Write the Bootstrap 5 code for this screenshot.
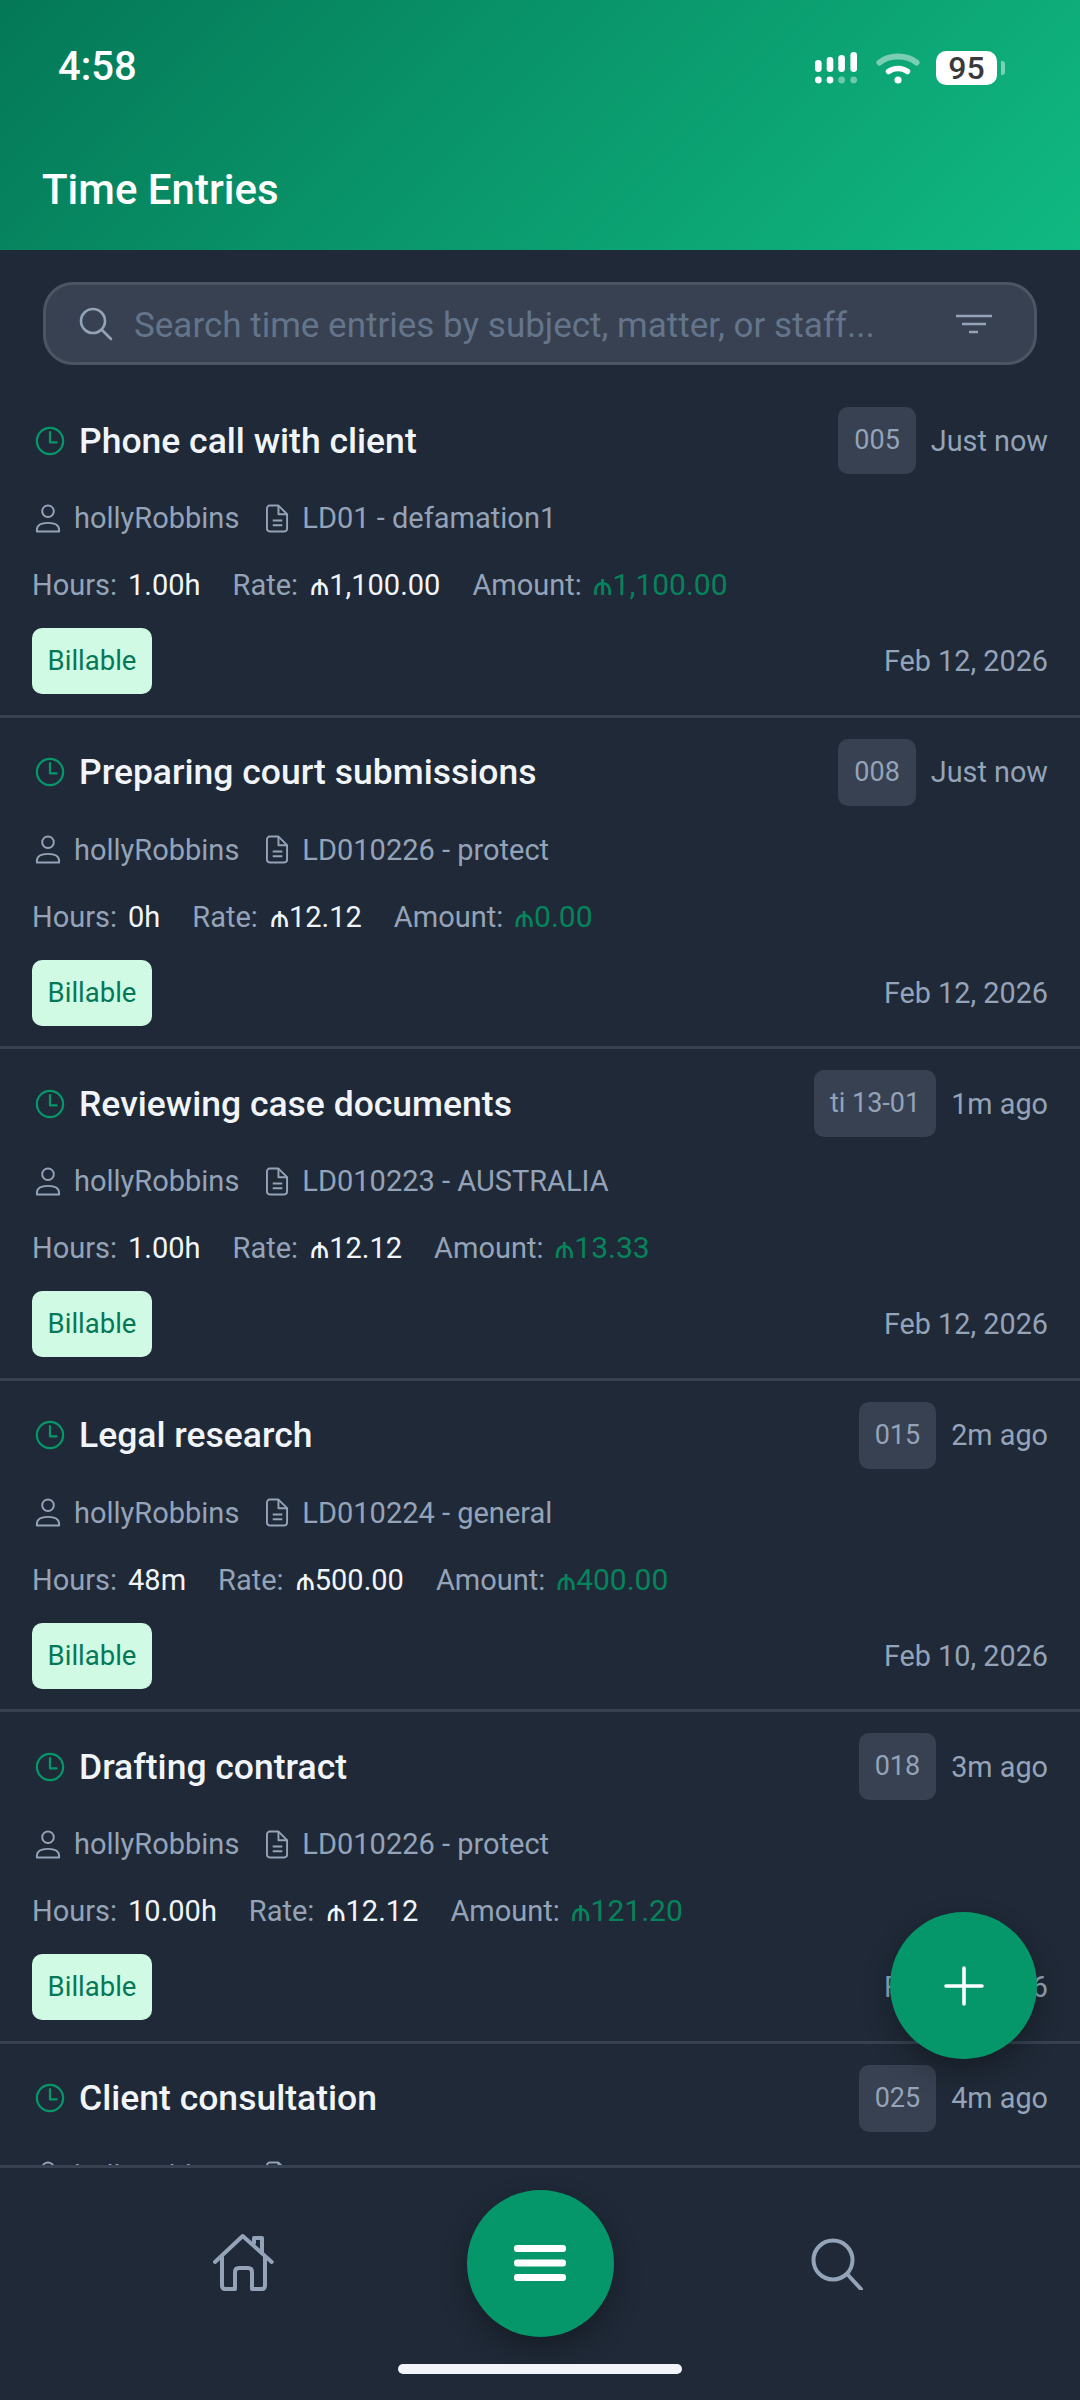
<!DOCTYPE html>
<html lang="en">
<head>
  <meta charset="UTF-8" />
  <meta name="viewport" content="width=device-width, initial-scale=1.0"/>
  <title>Time Entries</title>
  <link href="https://cdn.jsdelivr.net/npm/bootstrap@5.3.0/dist/css/bootstrap.min.css" rel="stylesheet" />
  <style>
    body {
      font-family: Roboto, "DejaVu Sans", sans-serif;
      background: #1f2937;
      margin: 0;
    }
    .app-screen {
      width: 1080px;
      height: 2400px;
      background: #1f2937;
      overflow: hidden;
    }
    .top-header {
      height: 250px;
      background: linear-gradient(135deg, #047857 0%, #10b981 100%);
      color: #fff;
    }
    .status-row {
      height: 167px;
      padding: 48px 75px 0 58px;
    }
    .clock-text { font-size: 40px; font-weight: 500; line-height: 38px; }
    .status-icons { margin-top: 3px; }
    .sig-ico { margin-right: 19px; }
    .wifi-ico { margin-right: 16px; }
    .batt-pill {
      width: 61px;
      height: 34px;
      background: #fff;
      border-radius: 10px;
      color: #3a3a3c;
      font-size: 32px;
      font-weight: 500;
      line-height: 34px;
      text-align: center;
    }
    .batt-cap { width: 4px; height: 14px; background: rgba(255,255,255,.45); border-radius: 0 3px 3px 0; margin-left: 4px; }
    .screen-title { font-size: 42px; font-weight: 500; line-height: 46px; padding-left: 42px; margin: 0; }

    .search-wrap { padding: 32px 43px 21px; }
    .search-box {
      height: 83px;
      background: #374151;
      border: 3px solid #4b5563;
      border-radius: 30px;
      padding: 0 42px 0 32px;
    }
    .search-box input {
      background: transparent;
      border: 0;
      box-shadow: none;
      color: #f1f5f9;
      font-size: 35px;
      padding: 6px 0 0 20px;
    }
    .search-box input::placeholder { color: #64748b; opacity: 1; }
    .search-box input:focus { background: transparent; box-shadow: none; color: #f1f5f9; }

    .entry-list { overflow: hidden; min-height: 0; }
    .entry-row {
      height: 331.5px;
      padding: 21px 32px 0 32px;
      border-bottom: 3px solid #374151;
    }
    .clock-ico { margin-left: 3px; }
    .entry-title { font-size: 35.5px; font-weight: 500; color: #f1f5f9; line-height: 40px; margin: 0 0 0 14px; }
    .entry-code {
      height: 67px;
      padding: 0 16px;
      background: #374151;
      border-radius: 10px;
      color: #94a3b8;
      font-size: 27px;
      line-height: 67px;
      margin-right: 15px;
    }
    .muted-text { color: #94a3b8; font-size: 29px; line-height: 36px; }
    .side-text { color: #94a3b8; font-size: 28.8px; line-height: 36px; }
    .entry-meta { margin-top: 26px; }
    .user-ico { margin: 0 13px 0 3px; }
    .file-ico { margin: 0 13px 0 27px; }
    .entry-stats { margin-top: 31px; column-gap: 32px; }
    .stat-val { color: #f1f5f9; margin-left: 11px; }
    .rate-val { color: #f1f5f9; margin-left: 12px; }
    .stat-amt { color: #05845c; margin-left: 11px; font-size: 30px; }
    .entry-foot { margin-top: 25px; }
    .bill-tag {
      height: 66px;
      width: 120px;
      background: #d1fae5;
      color: #047857;
      border-radius: 10px;
      font-size: 27.5px;
      font-weight: 450;
      line-height: 66px;
      text-align: center;
    }

    .bottom-bar {
      height: 235px;
      border-top: 3px solid #374151;
      background: #1f2937;
    }
    .nav-cell { width: 297px; height: 190px; }
    .green-fab {
      width: 147px;
      height: 147px;
      background: #059669;
      border-radius: 50%;
      border: 0;
      box-shadow: 0 12px 28px rgba(0,0,0,.28);
    }
    .add-fab { right: 43px; top: 1912px; }
    .home-bar {
      left: 398px;
      top: 2364px;
      width: 284px;
      height: 10px;
      background: #f1f5f9;
      border-radius: 5px;
    }
  </style>
</head>
<body>
  <div class="app-screen position-relative d-flex flex-column">

    <div class="top-header flex-shrink-0">
      <div class="status-row d-flex justify-content-between align-items-start">
        <span class="clock-text">4:58</span>
        <div class="status-icons d-flex align-items-center">
          <!-- signal -->
          <svg width="42" height="33" viewBox="0 0 42 33" fill="#fff" class="sig-ico">
            <rect x="0" y="8" width="6.6" height="12" rx="3.3"/>
            <rect x="11.7" y="5" width="6.6" height="15" rx="3.3"/>
            <rect x="23.3" y="3" width="6.6" height="17" rx="3.3"/>
            <rect x="35.4" y="0" width="6.6" height="20" rx="3.3"/>
            <circle cx="3.3" cy="28" r="3.4"/>
            <circle cx="15" cy="28" r="3.4"/>
            <circle cx="26.6" cy="28" r="3.4" opacity=".4"/>
            <circle cx="38.7" cy="28" r="3.4" opacity=".4"/>
          </svg>
          <!-- wifi -->
          <svg width="44" height="33" viewBox="0 0 44 33" fill="none" stroke="#fff" stroke-linecap="round" class="wifi-ico">
            <path d="M3.5 10.5C13 2.5 31 2.5 40.5 10.5" stroke-width="6" opacity=".45"/>
            <path d="M12.5 19.5C18 15.5 26 15.5 31.5 19.5" stroke-width="5.5"/>
            <circle cx="22" cy="28" r="3.6" fill="#fff" stroke="none"/>
          </svg>
          <div class="batt-pill">95</div>
          <div class="batt-cap"></div>
        </div>
      </div>
      <h1 class="screen-title">Time Entries</h1>
    </div>

    <div class="search-wrap flex-shrink-0">
      <div class="search-box d-flex align-items-center">
        <svg width="36" height="36" viewBox="0 0 36 36" fill="none" stroke="#94a3b8" stroke-width="2.6" stroke-linecap="round" class="flex-shrink-0">
          <circle cx="15" cy="15" r="12"/>
          <path d="M24 24l9 9"/>
        </svg>
        <input type="text" class="form-control" placeholder="Search time entries by subject, matter, or staff..." />
        <svg width="36" height="20" viewBox="0 0 36 20" fill="none" stroke="#94a3b8" stroke-width="2.6" class="flex-shrink-0">
          <path d="M0 2h36M6 10h24M13 18h9"/>
        </svg>
      </div>
    </div>

    <div class="entry-list flex-grow-1" id="entryList"></div>

    <div class="bottom-bar flex-shrink-0 d-flex justify-content-center">
      <div class="nav-cell d-flex align-items-center justify-content-center">
        <svg width="62" height="62" viewBox="22 32 62 62" fill="none" stroke="#94a3b8" stroke-width="4" stroke-linecap="round" stroke-linejoin="round">
          <path d="M25 62L52.7 36L81.7 62"/>
          <path d="M32 57V85Q32 89 35 89H45V72Q45 68 49 68H58Q62 68 62 72V89H72Q75 89 75 85V57"/>
          <path d="M64 43V38H72V53"/>
        </svg>
      </div>
      <div class="nav-cell d-flex align-items-center justify-content-center">
        <button class="green-fab d-flex align-items-center justify-content-center" type="button" aria-label="Menu">
          <svg width="52" height="36" viewBox="0 0 52 36" fill="#fff">
            <rect y="0" width="52" height="7" rx="3"/>
            <rect y="14.5" width="52" height="7" rx="3"/>
            <rect y="29" width="52" height="7" rx="3"/>
          </svg>
        </button>
      </div>
      <div class="nav-cell d-flex align-items-center justify-content-center">
        <svg width="54" height="54" viewBox="29 24 54 54" fill="none" stroke="#94a3b8" stroke-width="4" stroke-linecap="round">
          <circle cx="52" cy="48" r="19.5"/>
          <path d="M67 63L80 77"/>
        </svg>
      </div>
    </div>

    <button class="green-fab add-fab position-absolute d-flex align-items-center justify-content-center" type="button" aria-label="Add">
      <svg width="40" height="40" viewBox="0 0 40 40" stroke="#fff" stroke-width="3.6" stroke-linecap="round">
        <path d="M20 2v36M2 20h36"/>
      </svg>
    </button>
    <div class="home-bar position-absolute"></div>
  </div>

  <script>
    const entries = [
      { title: "Phone call with client", code: "005", ago: "Just now", matter: "LD01 - defamation1", hours: "1.00h", rate: "1,100.00", amount: "1,100.00", date: "Feb 12, 2026" },
      { title: "Preparing court submissions", code: "008", ago: "Just now", matter: "LD010226 - protect", hours: "0h", rate: "12.12", amount: "0.00", date: "Feb 12, 2026" },
      { title: "Reviewing case documents", code: "ti 13-01", ago: "1m ago", matter: "LD010223 - AUSTRALIA", hours: "1.00h", rate: "12.12", amount: "13.33", date: "Feb 12, 2026" },
      { title: "Legal research", code: "015", ago: "2m ago", matter: "LD010224 - general", hours: "48m", rate: "500.00", amount: "400.00", date: "Feb 10, 2026" },
      { title: "Drafting contract", code: "018", ago: "3m ago", matter: "LD010226 - protect", hours: "10.00h", rate: "12.12", amount: "121.20", date: "Feb 10, 2026" },
      // last row runs under the bottom bar, only its title and the top of the meta line show
      { title: "Client consultation", code: "025", ago: "4m ago", matter: "LD010225 - Conveyancing" }
    ];

    const clockIcon = `<svg width="30" height="30" viewBox="0 0 32 32" fill="none" stroke="#059669" stroke-width="2.4" stroke-linecap="round" stroke-linejoin="round" class="clock-ico flex-shrink-0"><circle cx="16" cy="16" r="14"/><path d="M16 6.5v11h7"/></svg>`;
    const userIcon = `<svg width="26" height="29" viewBox="0 0 26 30" fill="none" stroke="#94a3b8" stroke-width="2" stroke-linejoin="round" class="user-ico"><circle cx="13" cy="7.5" r="6"/><path d="M1.5 28.5v-1.5c0-4.5 4-7.5 11.5-7.5s11.5 3 11.5 7.5v1.5z"/></svg>`;
    const fileIcon = `<svg width="23" height="29" viewBox="0 0 24 30" fill="none" stroke="#94a3b8" stroke-width="2" stroke-linejoin="round" class="file-ico"><path d="M4 1.5h9l9 9v15a3 3 0 0 1-3 3h-15a3 3 0 0 1-3-3v-21a3 3 0 0 1 3-3z"/><path d="M13 1.5v9h9M7 17h10M7 22h10"/></svg>`;

    document.getElementById("entryList").innerHTML = entries.map(e => `
      <div class="entry-row">
        <div class="d-flex justify-content-between align-items-center">
          <div class="d-flex align-items-center">${clockIcon}<h2 class="entry-title">${e.title}</h2></div>
          <div class="d-flex align-items-center">
            <span class="entry-code">${e.code}</span>
            <span class="side-text">${e.ago}</span>
          </div>
        </div>
        <div class="entry-meta d-flex align-items-center muted-text">
          ${userIcon}<span>hollyRobbins</span>
          ${fileIcon}<span>${e.matter}</span>
        </div>
        ${e.hours ? `
        <div class="entry-stats d-flex muted-text">
          <span>Hours:<span class="stat-val">${e.hours}</span></span>
          <span>Rate:<span class="rate-val">₼${e.rate}</span></span>
          <span>Amount:<span class="stat-amt">₼${e.amount}</span></span>
        </div>
        <div class="entry-foot d-flex justify-content-between align-items-center">
          <span class="bill-tag">Billable</span>
          <span class="side-text">${e.date}</span>
        </div>` : ""}
      </div>`).join("");
  </script>
  <script src="https://cdn.jsdelivr.net/npm/bootstrap@5.3.0/dist/js/bootstrap.bundle.min.js"></script>
</body>
</html>
